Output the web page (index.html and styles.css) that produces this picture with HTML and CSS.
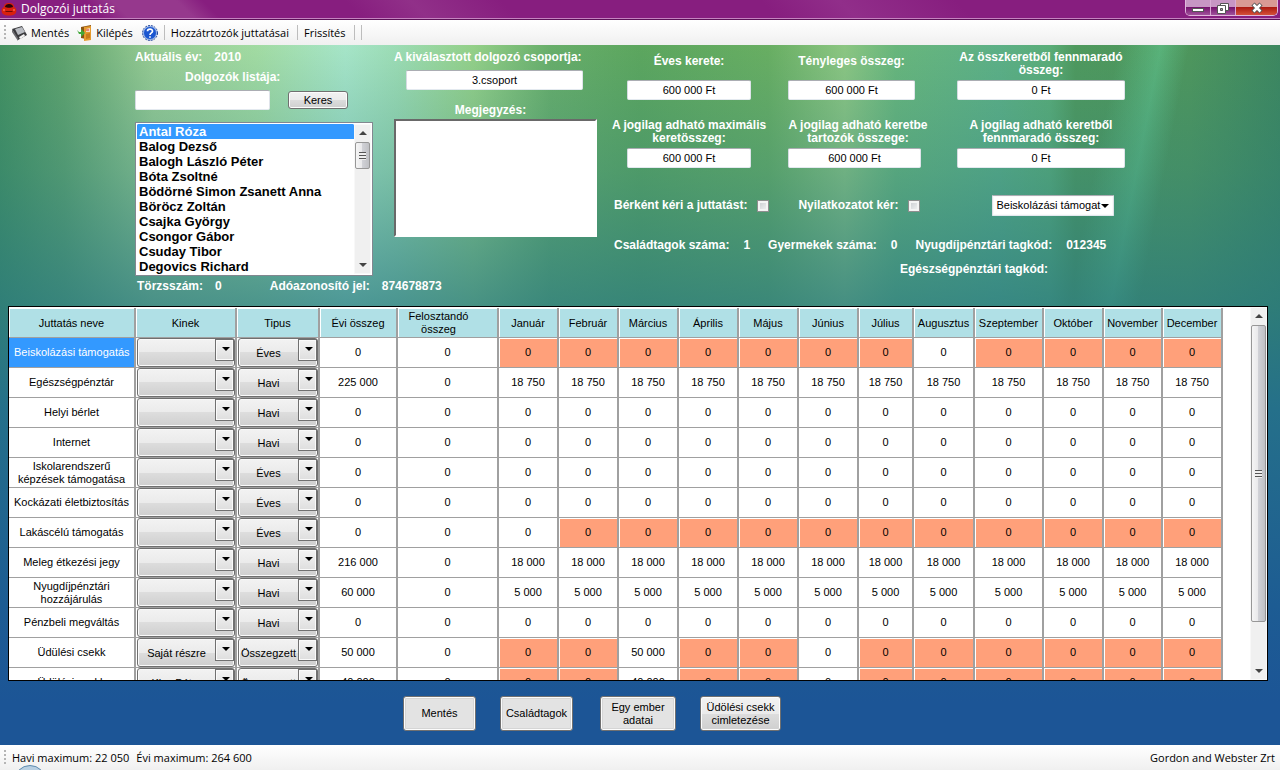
FILE: index.html
```html
<!DOCTYPE html>
<html lang="hu">
<head>
<meta charset="utf-8">
<title>Dolgozói juttatás</title>
<link rel="stylesheet" href="styles.css">
</head>
<body>
<header class="titlebar">
  <svg class="app-icon" width="16" height="16" viewBox="0 0 16 16"><path d="M3 6C3 3 5 2 8 2s5 1 5 4c3 1 3 5 1 7-3 2-9 2-12 0C0 11 0 7 3 6z" fill="#d8200e"/><path d="M4 6c0-4 8-4 8 0-2 1-6 1-8 0z" fill="#2a0505"/><path d="M4 10h8l-1 1H5z" fill="#6b0a04"/><path d="M2 9h2M12 9h2" stroke="#ff8a6a"/></svg>
  <h1 class="title">Dolgozói juttatás</h1>
  <div class="window-buttons">
    <button class="wb" aria-label="Kis méret"><svg width="14" height="12" viewBox="0 0 14 12"><rect x="1.500" y="6.500" width="11" height="3" fill="#fff" stroke="#555"/></svg></button>
    <button class="wb" aria-label="Előző méret"><svg width="14" height="12" viewBox="0 0 14 12"><path d="M4.500 1.500h8v7h-8z" fill="#fff" stroke="#555"/><path d="M1.500 3.500h8v8h-8z" fill="#fff" stroke="#555"/><path d="M4.500 6.500h2v2h-2z" fill="#a9a" stroke="#555"/></svg></button>
    <button class="wb wb-close" aria-label="Bezárás"><svg width="14" height="12" viewBox="0 0 14 12"><path d="M3 2l8 8M11 2l-8 8" stroke="#555" stroke-width="4.500"/><path d="M3.500 2.500l7 7M10.500 2.500l-7 7" stroke="#fff" stroke-width="2.500"/></svg></button>
  </div>
</header>
<nav class="toolbar">
  <span class="grip"></span>
  <button class="tool"><svg width="16" height="16" viewBox="0 0 16 16"><path d="M0 4l10-3 5 9-9 5z" fill="#3a3a3d"/><path d="M3 4l7-2 3 5-7 3z" fill="#b9bcc2"/><path d="M7 12l5-3 1 2-5 3z" fill="#f4f4f4"/><path d="M0 4l6 9v3L0 7z" fill="#6a6a6e"/></svg>Mentés</button>
  <button class="tool"><svg width="16" height="16" viewBox="0 0 16 16"><path d="M4 2l10-2v15L4 13z" fill="#8a5313"/><path d="M7 2l7-1v14l-7 1z" fill="#e59a2c"/><path d="M9 4l4-1v4H9z" fill="#f6d9c0"/><path d="M9 5h3" stroke="#d33"/><path d="M9 9l4-1v5l-4 1z" fill="#c97a1b"/><path d="M0 5l2 2h2V4l4 4-4 4V9H2z" fill="#42a83a"/></svg>Kilépés</button>
  <button class="tool tool-help" aria-label="Súgó"><svg width="16" height="16" viewBox="0 0 16 16"><circle cx="8" cy="8" r="6.500" fill="#1b56d0" stroke="#8fb0e8"/><circle cx="8" cy="8" r="7.500" fill="none" stroke="#1a3f9a" stroke-dasharray="2 1"/><path d="M5.500 6.300C5.500 3.300 10.500 3.300 10.500 6.200 10.500 8 8 7.800 8 10M8 11.200v1.600" fill="none" stroke="#fff" stroke-width="1.700"/></svg></button>
  <span class="sep"></span>
  <button class="tool">Hozzátrtozók juttatásai</button>
  <span class="sep"></span>
  <button class="tool">Frissítés</button>
  <span class="sep"></span><span class="sep"></span>
</nav>
<main class="workspace">
  <section class="form">
    <div class="people">
      <p class="year"><span>Aktuális év:</span><span>2010</span></p>
      <label class="people-title" for="search">Dolgozók listája:</label>
      <div class="search"><input id="search" class="box" type="text"><button class="btn-small">Keres</button></div>
      <div class="listbox">
        <select class="list" size="10" aria-label="Dolgozók listája">
          <option selected>Antal Róza</option><option>Balog Dezső</option><option>Balogh László Péter</option><option>Bóta Zsoltné</option><option>Bödörné Simon Zsanett Anna</option><option>Böröcz Zoltán</option><option>Csajka György</option><option>Csongor Gábor</option><option>Csuday Tibor</option><option>Degovics Richard</option>
        </select>
        <div class="scroll"><i class="up"></i><i class="thumb thumb-list"></i><i class="down"></i></div>
      </div>
      <p class="ids"><span>Törzsszám:</span><span class="ids-num">0</span><span>Adóazonosító jel:</span><span>874678873</span></p>
    </div>
    <div class="group">
      <label for="group">A kiválasztott dolgozó csoportja:</label>
      <input id="group" class="box group-box" type="text" value="3.csoport">
      <label for="note" class="note-label">Megjegyzés:</label>
      <textarea id="note" class="note"></textarea>
    </div>
    <div class="figures">
      <div class="sums">
        <div class="field"><label class="short" for="s1">Éves kerete:</label><input id="s1" class="box w-s" type="text" value="600 000 Ft"></div>
        <div class="field field-narrow"><label class="short" for="s2">Tényleges összeg:</label><input id="s2" class="box w-m" type="text" value="600 000 Ft"></div>
        <div class="field"><label for="s3">Az összkeretből fennmaradó<br>összeg:</label><input id="s3" class="box w-l" type="text" value="0 Ft"></div>
        <div class="field"><label for="s4">A jogilag adható maximális<br>keretösszeg:</label><input id="s4" class="box w-s" type="text" value="600 000 Ft"></div>
        <div class="field field-left"><label for="s5">A jogilag adható keretbe<br>tartozók összege:</label><input id="s5" class="box w-x" type="text" value="600 000 Ft"></div>
        <div class="field"><label for="s6">A jogilag adható keretből<br>fennmaradó összeg:</label><input id="s6" class="box w-l" type="text" value="0 Ft"></div>
      </div>
      <div class="options">
        <label class="check check-wage">Bérként kéri a juttatást:<input type="checkbox"></label>
        <label class="check">Nyilatkozatot kér:<input type="checkbox"></label>
        <span class="drop drop-flat"><select class="drop-select" aria-label="Juttatás"><option>Beiskolázási támogat</option></select></span>
      </div>
      <p class="facts"><span>Családtagok száma:</span><span>1</span><span class="fact-next">Gyermekek száma:</span><span>0</span><span class="fact-next">Nyugdíjpénztári tagkód:</span><span>012345</span></p>
      <p class="health">Egészségpénztári tagkód:</p>
    </div>
  </section>
  <section class="grid">
    <div class="grid-view">
    <table class="table">
      <colgroup><col class="c-name"><col class="c-who"><col class="c-type"><col class="c-sum"><col class="c-split"><col class="c-m"><col class="c-m"><col class="c-m"><col class="c-m"><col class="c-m"><col class="c-m"><col class="c-55"><col class="c-61"><col class="c-69"><col class="c-m"><col class="c-59"><col class="c-m"></colgroup>
      <thead><tr><th>Juttatás neve</th><th>Kinek</th><th>Tipus</th><th>Évi összeg</th><th class="top">Felosztandó összeg</th><th>Január</th><th>Február</th><th>Március</th><th>Április</th><th>Május</th><th>Június</th><th>Július</th><th>Augusztus</th><th>Szeptember</th><th>Október</th><th>November</th><th>December</th></tr></thead>
      <tbody>
      <tr><td class="sel">Beiskolázási támogatás</td><td><span class="drop"><select aria-label="Kinek"><option></option></select></span></td><td><span class="drop"><select aria-label="Tipus"><option>Éves</option></select></span></td><td>0</td><td>0</td><td class="off">0</td><td class="off">0</td><td class="off">0</td><td class="off">0</td><td class="off">0</td><td class="off">0</td><td class="off">0</td><td>0</td><td class="off">0</td><td class="off">0</td><td class="off">0</td><td class="off">0</td></tr>
      <tr><td>Egészségpénztár</td><td><span class="drop"><select aria-label="Kinek"><option></option></select></span></td><td><span class="drop"><select aria-label="Tipus"><option>Havi</option></select></span></td><td>225 000</td><td>0</td><td>18 750</td><td>18 750</td><td>18 750</td><td>18 750</td><td>18 750</td><td>18 750</td><td>18 750</td><td>18 750</td><td>18 750</td><td>18 750</td><td>18 750</td><td>18 750</td></tr>
      <tr><td>Helyi bérlet</td><td><span class="drop"><select aria-label="Kinek"><option></option></select></span></td><td><span class="drop"><select aria-label="Tipus"><option>Havi</option></select></span></td><td>0</td><td>0</td><td>0</td><td>0</td><td>0</td><td>0</td><td>0</td><td>0</td><td>0</td><td>0</td><td>0</td><td>0</td><td>0</td><td>0</td></tr>
      <tr><td>Internet</td><td><span class="drop"><select aria-label="Kinek"><option></option></select></span></td><td><span class="drop"><select aria-label="Tipus"><option>Havi</option></select></span></td><td>0</td><td>0</td><td>0</td><td>0</td><td>0</td><td>0</td><td>0</td><td>0</td><td>0</td><td>0</td><td>0</td><td>0</td><td>0</td><td>0</td></tr>
      <tr><td>Iskolarendszerű képzések támogatása</td><td><span class="drop"><select aria-label="Kinek"><option></option></select></span></td><td><span class="drop"><select aria-label="Tipus"><option>Éves</option></select></span></td><td>0</td><td>0</td><td>0</td><td>0</td><td>0</td><td>0</td><td>0</td><td>0</td><td>0</td><td>0</td><td>0</td><td>0</td><td>0</td><td>0</td></tr>
      <tr><td>Kockázati életbiztosítás</td><td><span class="drop"><select aria-label="Kinek"><option></option></select></span></td><td><span class="drop"><select aria-label="Tipus"><option>Éves</option></select></span></td><td>0</td><td>0</td><td>0</td><td>0</td><td>0</td><td>0</td><td>0</td><td>0</td><td>0</td><td>0</td><td>0</td><td>0</td><td>0</td><td>0</td></tr>
      <tr><td>Lakáscélú támogatás</td><td><span class="drop"><select aria-label="Kinek"><option></option></select></span></td><td><span class="drop"><select aria-label="Tipus"><option>Éves</option></select></span></td><td>0</td><td>0</td><td>0</td><td class="off">0</td><td class="off">0</td><td class="off">0</td><td class="off">0</td><td class="off">0</td><td class="off">0</td><td class="off">0</td><td class="off">0</td><td class="off">0</td><td class="off">0</td><td class="off">0</td></tr>
      <tr><td>Meleg étkezési jegy</td><td><span class="drop"><select aria-label="Kinek"><option></option></select></span></td><td><span class="drop"><select aria-label="Tipus"><option>Havi</option></select></span></td><td>216 000</td><td>0</td><td>18 000</td><td>18 000</td><td>18 000</td><td>18 000</td><td>18 000</td><td>18 000</td><td>18 000</td><td>18 000</td><td>18 000</td><td>18 000</td><td>18 000</td><td>18 000</td></tr>
      <tr><td>Nyugdíjpénztári hozzájárulás</td><td><span class="drop"><select aria-label="Kinek"><option></option></select></span></td><td><span class="drop"><select aria-label="Tipus"><option>Havi</option></select></span></td><td>60 000</td><td>0</td><td>5 000</td><td>5 000</td><td>5 000</td><td>5 000</td><td>5 000</td><td>5 000</td><td>5 000</td><td>5 000</td><td>5 000</td><td>5 000</td><td>5 000</td><td>5 000</td></tr>
      <tr><td>Pénzbeli megváltás</td><td><span class="drop"><select aria-label="Kinek"><option></option></select></span></td><td><span class="drop"><select aria-label="Tipus"><option>Havi</option></select></span></td><td>0</td><td>0</td><td>0</td><td>0</td><td>0</td><td>0</td><td>0</td><td>0</td><td>0</td><td>0</td><td>0</td><td>0</td><td>0</td><td>0</td></tr>
      <tr><td>Üdülési csekk</td><td><span class="drop"><select aria-label="Kinek"><option>Saját részre</option></select></span></td><td><span class="drop"><select aria-label="Tipus"><option>Összegzett</option></select></span></td><td>50 000</td><td>0</td><td class="off">0</td><td class="off">0</td><td>50 000</td><td class="off">0</td><td class="off">0</td><td>0</td><td class="off">0</td><td class="off">0</td><td class="off">0</td><td class="off">0</td><td class="off">0</td><td class="off">0</td></tr>
      <tr><td>Üdülési csekk</td><td><span class="drop"><select aria-label="Kinek"><option>Kiss Péter</option></select></span></td><td><span class="drop"><select aria-label="Tipus"><option>Összegzett</option></select></span></td><td>40 000</td><td>0</td><td class="off">0</td><td class="off">0</td><td>40 000</td><td class="off">0</td><td class="off">0</td><td>0</td><td class="off">0</td><td class="off">0</td><td class="off">0</td><td class="off">0</td><td class="off">0</td><td class="off">0</td></tr>
      </tbody>
    </table>
    </div>
    <div class="scroll"><i class="up"></i><i class="thumb thumb-grid"></i><i class="down"></i></div>
  </section>
  <div class="actions">
    <button class="action a-1">Mentés</button>
    <button class="action a-1">Családtagok</button>
    <button class="action a-2">Egy ember adatai</button>
    <button class="action a-3">Üdölési csekk cimletezése</button>
  </div>
</main>
<footer class="status"><span class="grip"></span><span>Havi maximum: 22 050</span><span>Évi maximum: 264 600</span><span class="company">Gordon and Webster Zrt</span><i class="orb"></i></footer>
</body>
</html>
```
FILE: styles.css
```css
* { box-sizing: border-box; }
body {
  margin: 0; height: 100vh; display: flex; flex-direction: column; overflow: hidden;
  font: 11px/13px "Liberation Sans", Arial, sans-serif; color: #000;
}
button, input, select, textarea { font: inherit; color: inherit; margin: 0; }
p { margin: 0; }
.titlebar {
  display: flex; align-items: flex-start; height: 20px; flex: none; color: #fff;
  background: linear-gradient(45deg, transparent 0 8%, #96388d 10% 15%, transparent 17% 28%, #913089 33%, transparent 40% 60%, #912e8a 66%, transparent 75%), #871e7f;
  border-bottom: 1px solid #5b1157; box-shadow: inset 0 -1px #c584c0;
}
.app-icon { margin: 1px 4px 0 1px; }
.title { margin: 0; font: 12px/18px "Open Sans", "Noto Sans", sans-serif; flex: 1; }
.window-buttons { display: flex; margin-right: 2px; border: 1px solid #e0b8dc; border-top: 0; border-radius: 0 0 5px 5px; overflow: hidden; }
.wb { width: 25px; height: 15px; padding: 1px 0 0; border: 0; border-right: 1px solid #d9a9d5; background: linear-gradient(#c796c4 0 45%, #76146f 50%, #a0529b); display: grid; place-items: center; }
.wb-close { width: 41px; border-right: 0; background: linear-gradient(#d99a94 0 45%, #ad1c12 50%, #d4503a); }
.toolbar, .status { font: 11px/16px "Open Sans", "Noto Sans", sans-serif; display: flex; align-items: center; flex: none; height: 25px; background: linear-gradient(#fff, #f0f0f0); }
.toolbar { padding-left: 4px; }
.grip { width: 2px; height: 15px; margin-right: 6px; background: repeating-linear-gradient(#b5b5b5 0 2px, transparent 2px 4px); }
.tool { display: flex; align-items: center; gap: 3px; border: 0; background: none; padding: 0 4px 0 0; margin-right: 4px; }
.tool-help { padding: 0; margin: 0 6px 0 1px; }
.sep { width: 1px; height: 15px; background: #bdbdbd; margin-right: 6px; }
.workspace {
  flex: 1; min-height: 0; display: flex; flex-direction: column;
  background:
    linear-gradient(rgba(43,125,130,0), rgba(43,125,130,.3) 18%, rgba(40,120,130,.7) 37%, #25708a 52%, #1d5c93 80%, #1c5596 94%),
    linear-gradient(101deg, transparent 79%, rgba(100,205,150,.5) 82%, transparent 84%),
    linear-gradient(90deg, #43905f, #5fa36d 5%, #98cc94 12%, #a2dba2 20%, #a6e5c8 27%, #9cdcb4 31%, #94d088 37%, #68ae6a 43%, #5ca65e 50%, #68ae62 60%, #8cc682 66%, #68b67c 70%, #5db086 78%, #5aad78 82%, #4f995d 84%, #4e965c 93%, #3d875f);
}
.form { display: flex; align-items: flex-start; flex: none; padding: 6px 8px 13px 135px; color: #fff; font-size: 12px; font-weight: bold; }
.box { height: 20px; width: 100%; padding: 0 4px; border: 1px solid; border-color: #abadb3 #dfe3ea #e3e9ef #d5dbe2; border-radius: 2px; background: #fff; color: #000; font-size: 11px; font-weight: normal; text-align: center; }
.people { width: 238px; margin-right: 21px; display: flex; flex-direction: column; }
.year { display: flex; gap: 12px; }
.people-title { margin: 7px 0 6px 50px; }
.search { display: flex; align-items: center; gap: 18px; }
.search .box { width: 135px; }
.btn-small { width: 60px; height: 18px; padding: 0; color: #000; font-size: 11px; font-weight: normal; border: 1px solid #707070; border-radius: 3px; background: linear-gradient(#f2f2f2, #ebebeb 50%, #ddd 50%, #cfcfcf); box-shadow: inset 0 0 0 1px #fcfcfc; }
.listbox { display: flex; height: 154px; margin: 12px 0 4px; border: 1px solid #828790; padding: 1px; background: #fff; }
.list { flex: 1; min-width: 0; border: 0; padding: 0; background: #fff; color: #000; overflow: hidden; outline: 0; }
.list option { padding: 0 2px; height: 15px; min-height: 15px; font: bold 13px/15px "Liberation Sans", Arial, sans-serif; }
.list option:checked { background: #39f linear-gradient(#39f, #39f); color: #fff; }
.scroll { width: 17px; flex: none; display: flex; flex-direction: column; align-items: center; background: #f0f0f0; padding: 6px 0; border: 1px solid #f8f8f8; }
.up, .down { border: 4px solid transparent; flex: none; }
.up { border-top: 0; border-bottom-color: #444; }
.down { border-bottom: 0; border-top-color: #444; margin-top: auto; }
.thumb { width: 15px; border: 1px solid #979797; border-radius: 2px; margin-top: 7px; display: grid; place-items: center; background: linear-gradient(90deg, #f5f5f5, #e9e9eb 45%, #d0d1d6 50%, #bfc0c4); }
.thumb::before { content: ""; width: 7px; height: 8px; background: repeating-linear-gradient(#555 0 1px, #eee 1px 3px); }
.thumb-list { height: 27px; }
.thumb-grid { height: 297px; }
.ids { display: flex; padding-left: 2px; gap: 12px; white-space: nowrap; }
.ids-num { margin-right: 36px; }
.group { width: 203px; margin-right: 17px; display: flex; flex-direction: column; white-space: nowrap; }
.group-box { width: 177px; margin: 6px 0 14px 12px; }
.note-label { align-self: center; margin-right: 10px; margin-bottom: 2px; }
.note { height: 118px; resize: none; border: 2px solid; border-color: #696969 #fff #fff #696969; background: #fff; padding: 2px; }
.figures { flex: 1; min-width: 0; }
.sums { display: grid; grid-template-columns: 150px 140px 178px; column-gap: 24px; row-gap: 19px; }
.field { display: flex; flex-direction: column; align-items: center; }
.field-narrow { width: 127px; }
.field-left .box { align-self: flex-start; }
.field label { height: 26px; margin-bottom: 3px; text-align: center; white-space: nowrap; }
.field .short { line-height: 20px; }
.w-s { width: 124px; } .w-m { width: 127px; } .w-x { width: 133px; } .w-l { width: 168px; }
.options { display: flex; align-items: center; margin-top: 27px; }
.check { display: flex; align-items: center; gap: 10px; }
.check-wage { margin-right: 29px; }
.check input { appearance: none; width: 12px; height: 12px; border: 1px solid #8e8f8f; background: linear-gradient(135deg, #c6cace, #f6f6f6); box-shadow: inset 0 0 0 2px #f4f4f4; }
.facts { display: flex; gap: 14px; margin-top: 23px; white-space: nowrap; }
.fact-next { margin-left: 4px; }
.health { margin: 11px 0 0 286px; }
.drop { position: relative; display: block; height: 29px; }
.drop select { appearance: none; display: block; width: 100%; height: 100%; padding: 2px 19px 0 0; text-align-last: center; border: 1px solid #707070; border-radius: 3px; background: linear-gradient(#f2f2f2, #ebebeb 50%, #ddd 50%, #cfcfcf); box-shadow: inset 0 0 0 1px #fafafa; }
.drop::before { content: ""; position: absolute; right: 1px; top: 1px; width: 17px; height: 20px; border: 1px solid #707070; background: linear-gradient(#f4f4f4, #dedede); box-shadow: inset 0 0 0 1px #fafafa; pointer-events: none; }
.drop::after { content: ""; position: absolute; right: 5px; top: 9px; border: 4px solid transparent; border-top-color: #000; border-bottom: 0; pointer-events: none; }
.drop-flat { width: 122px; height: 21px; margin-left: 72px; color: #000; font-size: 11px; font-weight: normal; }
.drop-flat .drop-select { padding: 0 0 0 3px; text-align-last: left; background: #fff; border-color: #abadb3 #dfe3ea #e3e9ef; border-radius: 1px; }
.drop-flat::before { display: none; }
.grid { flex: 1; min-height: 0; margin: 0 12px 0 8px; display: flex; border: 1px solid #000; background: #fff; overflow: hidden; }
.grid-view { flex: 1; min-width: 0; overflow: hidden; padding: 1px 27px 0 0; }
.table { width: 100%; table-layout: fixed; border-collapse: separate; border-spacing: 0; text-align: center; }
.c-name { width: 127px; } .c-who { width: 101px; } .c-type { width: 83px; } .c-sum { width: 78px; } .c-split { width: 101px; }
.c-m { width: 60px; } .c-55 { width: 55px; } .c-61 { width: 61px; } .c-69 { width: 69px; } .c-59 { width: 59px; }
.table th, .table td { height: 30px; padding: 0; border-right: 2px solid #a0a0a0; border-bottom: 1px solid #a0a0a0; font-weight: normal; }
.table th { background: #b0e0e6; box-shadow: inset 1px 1px #fff; white-space: nowrap; padding-top: 2px; }
.table td:first-child { padding: 0 5px; }
.table td:nth-child(2), .table td:nth-child(3) { padding-left: 1px; }
.table .top { vertical-align: top; white-space: normal; padding: 2px 18px 0 0; }
.table .sel { background: #39f; color: #fff; padding: 0; white-space: nowrap; }
.table .off { background: #ffa07a; box-shadow: inset 1px 1px #fff; }
.actions { display: flex; flex: none; padding: 15px 0 14px 403px; }
.action { height: 35px; border: 1px solid #707070; border-radius: 3px; padding: 0 4px; background: #e3e3e3; box-shadow: inset 0 0 0 1px #fcfcfc, inset 0 0 0 2px #d5d5d5; }
.a-1 { width: 73px; margin-right: 24px; }
.a-1 + .a-1 { margin-right: 27px; }
.a-2 { width: 76px; margin-right: 24px; }
.a-3 { width: 81px; background: linear-gradient(#f2f2f2, #ebebeb 50%, #ddd 50%, #cfcfcf); box-shadow: inset 0 0 0 1px #fcfcfc; }
.status { position: relative; padding: 0 5px 0 4px; gap: 7px; overflow: hidden; }
.status .grip { margin-right: -1px; }
.company { margin-left: auto; }
.orb { position: absolute; left: 14px; top: 20px; width: 32px; height: 32px; border-radius: 50%; background: #b7cfe2; border: 1px solid #5f8cb0; }
```
